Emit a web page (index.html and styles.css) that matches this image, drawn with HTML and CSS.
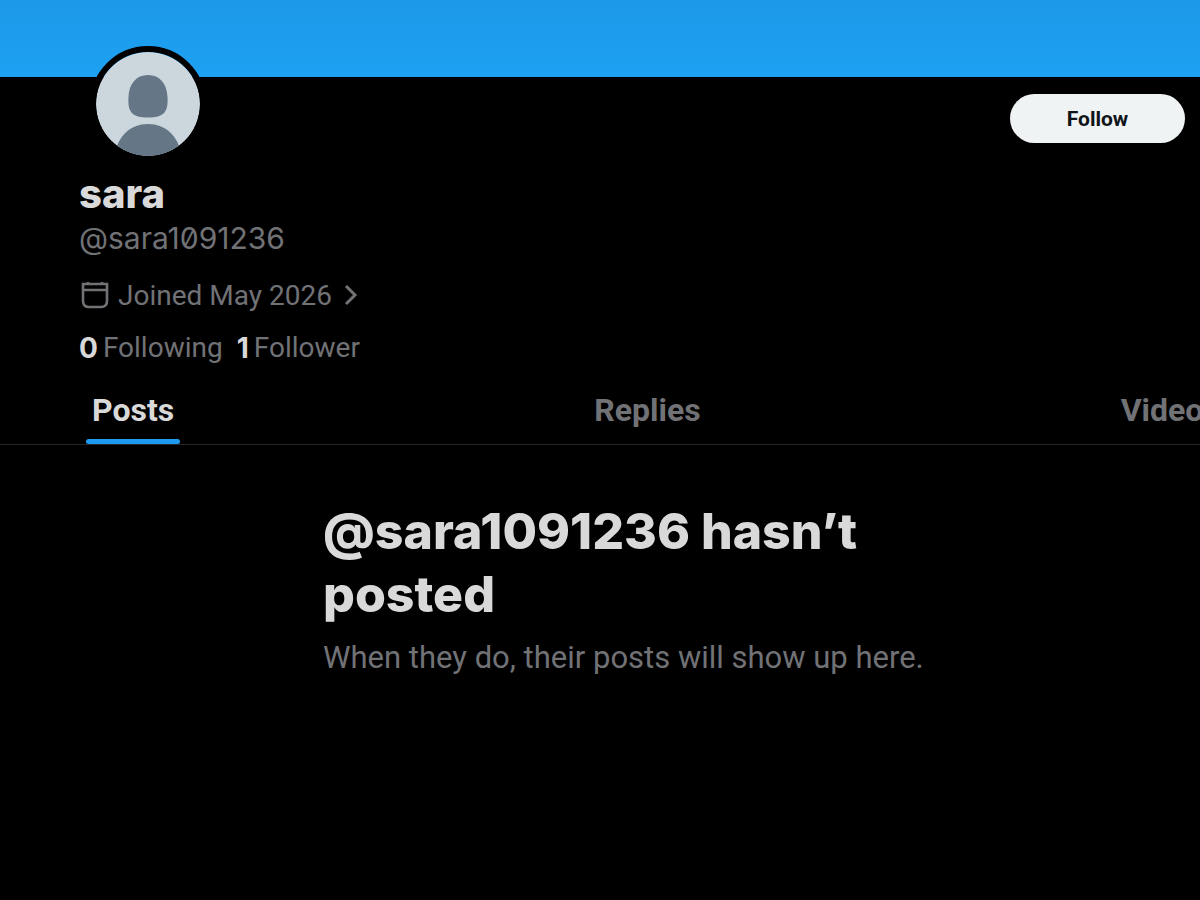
FILE: index.html
```html
<!DOCTYPE html>
<html lang="en">
<head>
<meta charset="utf-8">
<meta name="viewport" content="width=device-width, initial-scale=1">
<title>sara (@sara1091236)</title>
<link rel="stylesheet" href="styles.css">
</head>
<body>
<div class="banner"></div>
<main>
  <header class="profile">
    <div class="profile-top">
      <svg class="avatar" viewBox="0 0 104 104" role="img" aria-label="Default avatar">
        <defs><clipPath id="round"><circle cx="52" cy="52" r="52"/></clipPath></defs>
        <g clip-path="url(#round)">
          <rect width="104" height="104" fill="#ccd6dd"/>
          <path d="M52 23C64 23 71 32 71.500 45C72.500 60 68 65.500 52 65.500S31.500 60 32.500 45C33 32 40 23 52 23Z" fill="#657786"/>
          <path d="M18 104C22 84 34 72 52 72S82 84 86 104Z" fill="#657786"/>
        </g>
      </svg>
      <button class="follow" type="button">Follow</button>
    </div>
    <h1 class="name">sara</h1>
    <p class="handle">@sara1091236</p>
    <a class="joined" href="#about">
      <svg class="calendar" viewBox="0 0 28 28" aria-hidden="true"><path d="M2 2H26V19Q26 25 20 25H8Q2 25 2 19ZM2 8H26M7 0V2M21 0V2" fill="none" stroke="currentColor" stroke-width="2.600"/></svg>
      <span>Joined May 2026</span>
      <svg class="chevron" viewBox="0 0 14 22" aria-hidden="true"><path d="M2 1L11 10L2 19" fill="none" stroke="currentColor" stroke-width="3"/></svg>
    </a>
    <p class="counts"><a href="#following"><b>0</b> <span>Following</span></a><a href="#followers"><b>1</b> <span>Follower</span></a></p>
  </header>
  <nav class="tabs" aria-label="Profile">
    <button class="tab selected" type="button">Posts</button>
    <button class="tab" type="button">Replies</button>
    <button class="tab" type="button">Videos</button>
  </nav>
  <section class="empty">
    <h2>@sara1091236 hasn’t posted</h2>
    <p>When they do, their posts will show up here.</p>
  </section>
</main>
</body>
</html>
```
FILE: styles.css
```css
* { box-sizing: border-box; margin: 0; }
body {
  background: #000;
  color: #717276;
  font-family: Roboto, "Liberation Sans", sans-serif;
  overflow-x: hidden;
}
a { color: inherit; text-decoration: none; }
button { border: 0; font-family: inherit; cursor: pointer; }
.banner { height: 77px; background: linear-gradient(#1d98e8, #1da1f2); }
.profile { padding: 0 15px 0 79px; }
.profile-top { display: flex; justify-content: space-between; align-items: flex-start; }
.avatar {
  width: 116px;
  height: 116px;
  margin: -31px 0 0 11px;
  border: 6px solid #000;
  border-radius: 50%;
}
.follow {
  width: 175px;
  height: 49px;
  margin-top: 17px;
  border-radius: 25px;
  background: #eff3f4;
  color: #0f1419;
  font-size: 21px;
  font-weight: 700;
}
.name, .empty h2 { color: #d9d9d9; font-family: Inter, Roboto, sans-serif; font-weight: 800; }
.name { margin-top: 8px; font-size: 40px; line-height: 48px; }
.handle { font-family: Inter, Roboto, sans-serif; font-size: 30px; line-height: 40px; font-variant-numeric: slashed-zero; }
.joined { display: flex; align-items: center; width: max-content; margin-top: 20px; font-size: 28px; line-height: 36px; }
.calendar { width: 28px; height: 28px; margin: 0 9px 0 2px; }
.chevron { width: 14px; height: 22px; margin-left: 12px; }
.counts { display: flex; gap: 14px; margin-top: 16px; font-size: 28px; line-height: 36px; }
.counts a { display: flex; gap: 5px; }
.counts b { color: #d9d9d9; font-family: Inter, Roboto, sans-serif; }
.tabs {
  display: flex;
  gap: 34vw;
  margin-top: 19px;
  padding-left: 86px;
  border-bottom: 1px solid #242628;
  overflow: hidden;
}
.tab {
  flex: none;
  padding: 5px 6px 9px;
  border-bottom: 5px solid transparent;
  background: none;
  color: inherit;
  font-size: 32px;
  line-height: 40px;
  font-weight: 700;
}
.selected { position: relative; color: #d9d9d9; }
.selected::after {
  content: "";
  position: absolute;
  inset: auto 0 -5px;
  height: 5px;
  border-radius: 3px;
  background: #1d9bf0;
}
.empty { max-width: 680px; margin: 55px auto 0; padding: 0 0 40px 63px; }
.empty h2 { font-size: 50px; line-height: 63px; }
.empty p { margin-top: 12px; font-size: 31px; line-height: 40px; }
```
